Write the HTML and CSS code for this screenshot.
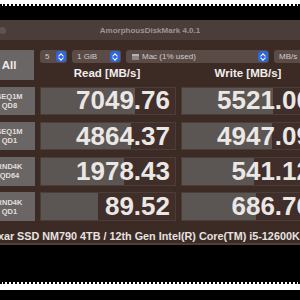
FILE: index.html
```html
<!DOCTYPE html>
<html>
<head>
    <title>AmorphousDiskMark</title>
    <meta charset="utf-8">
    <link rel="stylesheet" href="styles.css">
</head>
<body>
    <div class="edge edge-top"></div>
    <div class="window">
        <div class="titlebar">
            <span class="light"></span>
            <span class="title">AmorphousDiskMark 4.0.1</span>
        </div>
        <div class="panel">
            <div class="top">
                <div class="all-btn">All</div>
                <div class="top-right">
                    <div class="controls">
                        <div class="select w-count"><span>5</span><span class="stepper"></span></div>
                        <div class="select w-size"><span>1 GiB</span><span class="stepper"></span></div>
                        <div class="select w-drive"><span class="drive"></span><span>Mac (1% used)</span><span class="stepper"></span></div>
                        <div class="select w-unit"><span>MB/s</span><span class="stepper"></span></div>
                    </div>
                    <div class="headings">
                        <div>Read [MB/s]</div>
                        <div>Write [MB/s]</div>
                    </div>
                </div>
            </div>
            <div class="rows">
                <div class="label">SEQ1M<br>QD8</div>
                <div class="value"><div class="bar" style="width: 70%"></div><span>7049.76</span></div>
                <div class="value"><div class="bar" style="width: 68%"></div><span>5521.00</span></div>

                <div class="label">SEQ1M<br>QD1</div>
                <div class="value"><div class="bar" style="width: 67.4%"></div><span>4864.37</span></div>
                <div class="value"><div class="bar" style="width: 67%"></div><span>4947.09</span></div>

                <div class="label">RND4K<br>QD64</div>
                <div class="value"><div class="bar" style="width: 61.8%"></div><span>1978.43</span></div>
                <div class="value"><div class="bar" style="width: 54%"></div><span>541.12</span></div>

                <div class="label">RND4K<br>QD1</div>
                <div class="value"><div class="bar" style="width: 42.6%"></div><span>89.52</span></div>
                <div class="value"><div class="bar" style="width: 55.4%"></div><span>686.76</span></div>
            </div>
            <div class="footer">Lexar SSD NM790 4TB / 12th Gen Intel(R) Core(TM) i5-12600K</div>
        </div>
    </div>
    <div class="edge edge-bottom"></div>
</body>
</html>
```

FILE: styles.css
```css
* { margin: 0; padding: 0; box-sizing: border-box; }
html, body { width: 300px; height: 300px; overflow: hidden; }
body { background: #000; font-family: "Liberation Sans", Arial, sans-serif; }

.edge { height: 6px; background: #fff; }
.edge-top { margin-bottom: 14px; border-bottom: 2px dotted #000; }
.edge-bottom { margin-top: 37px; border-top: 2px dotted #000; height: 8px; }

.window { margin-left: -16px; width: 332px; background: #3c2b25; }
.titlebar { height: 20px; background: #4b3e3a; display: flex; align-items: center; justify-content: center; position: relative; }
.light { position: absolute; left: 15px; top: 7px; width: 7px; height: 7px; border-radius: 50%; background: #5f5451; }
.title { font-size: 8px; font-weight: bold; color: #9c9593; }

.panel { padding-top: 10px; }
.top { display: flex; gap: 5px; }
.all-btn { width: 51px; height: 30px; background: #6a6665; color: #eeeae8; font-weight: bold; font-size: 11.5px; display: flex; align-items: center; justify-content: center; }
.top-right { flex: 1; }
.controls { display: flex; gap: 5px; height: 13px; padding-left: 1px; }
.select { height: 13px; background: #5a4b46; border-radius: 3px; color: #d2ccca; font-size: 8px; display: flex; align-items: center; padding-left: 5px; gap: 3px; position: relative; }
.select .stepper { position: absolute; right: 1px; top: 1px; width: 10px; height: 11px; border-radius: 3px; background: #2f66dc; }
.select .stepper::before, .select .stepper::after { content: ""; position: absolute; left: 3px; width: 3px; height: 3px; border-left: 1px solid #fff; border-top: 1px solid #fff; }
.select .stepper::before { top: 2.5px; transform: rotate(45deg); }
.select .stepper::after { bottom: 2.5px; transform: rotate(225deg); }
.w-count { width: 27px; }
.w-size { width: 49px; }
.w-drive { width: 143px; padding-left: 6px; }
.w-unit { width: 40px; }
.drive { width: 7px; height: 6px; background: #8d8886; border-top: 2px solid #b6b2b0; }

.headings { display: grid; grid-template-columns: 136px 136px; column-gap: 5px; padding-top: 4px; height: 17px; }
.headings div { text-align: center; color: #f2eeec; font-weight: bold; font-size: 11.5px; line-height: 13px; }

.rows { display: grid; grid-template-columns: 51px 136px 136px; grid-auto-rows: 28.5px; gap: 6.8px 5px; margin-top: 6.5px; }
.label { background: #6a6665; color: #e2dedc; font-size: 7.5px; font-weight: bold; line-height: 9px; text-align: center; display: flex; align-items: center; justify-content: center; }
.value { position: relative; background: #3f2e29; border: 1px solid #4d3d38; display: flex; align-items: center; justify-content: flex-end; padding-right: 5px; }
.value .bar { position: absolute; left: 0; top: 0; bottom: 0; background: #5b5553; }
.value span { position: relative; color: #ebe7e5; font-weight: bold; font-size: 26px; }

.footer { margin-top: 7px; margin-bottom: 11px; height: 17px; padding-right: 15px; color: #e6e2e0; font-size: 10.8px; font-weight: bold; text-align: center; line-height: 16px; white-space: nowrap; border-bottom: 2px solid #4e3f3a; }
```
